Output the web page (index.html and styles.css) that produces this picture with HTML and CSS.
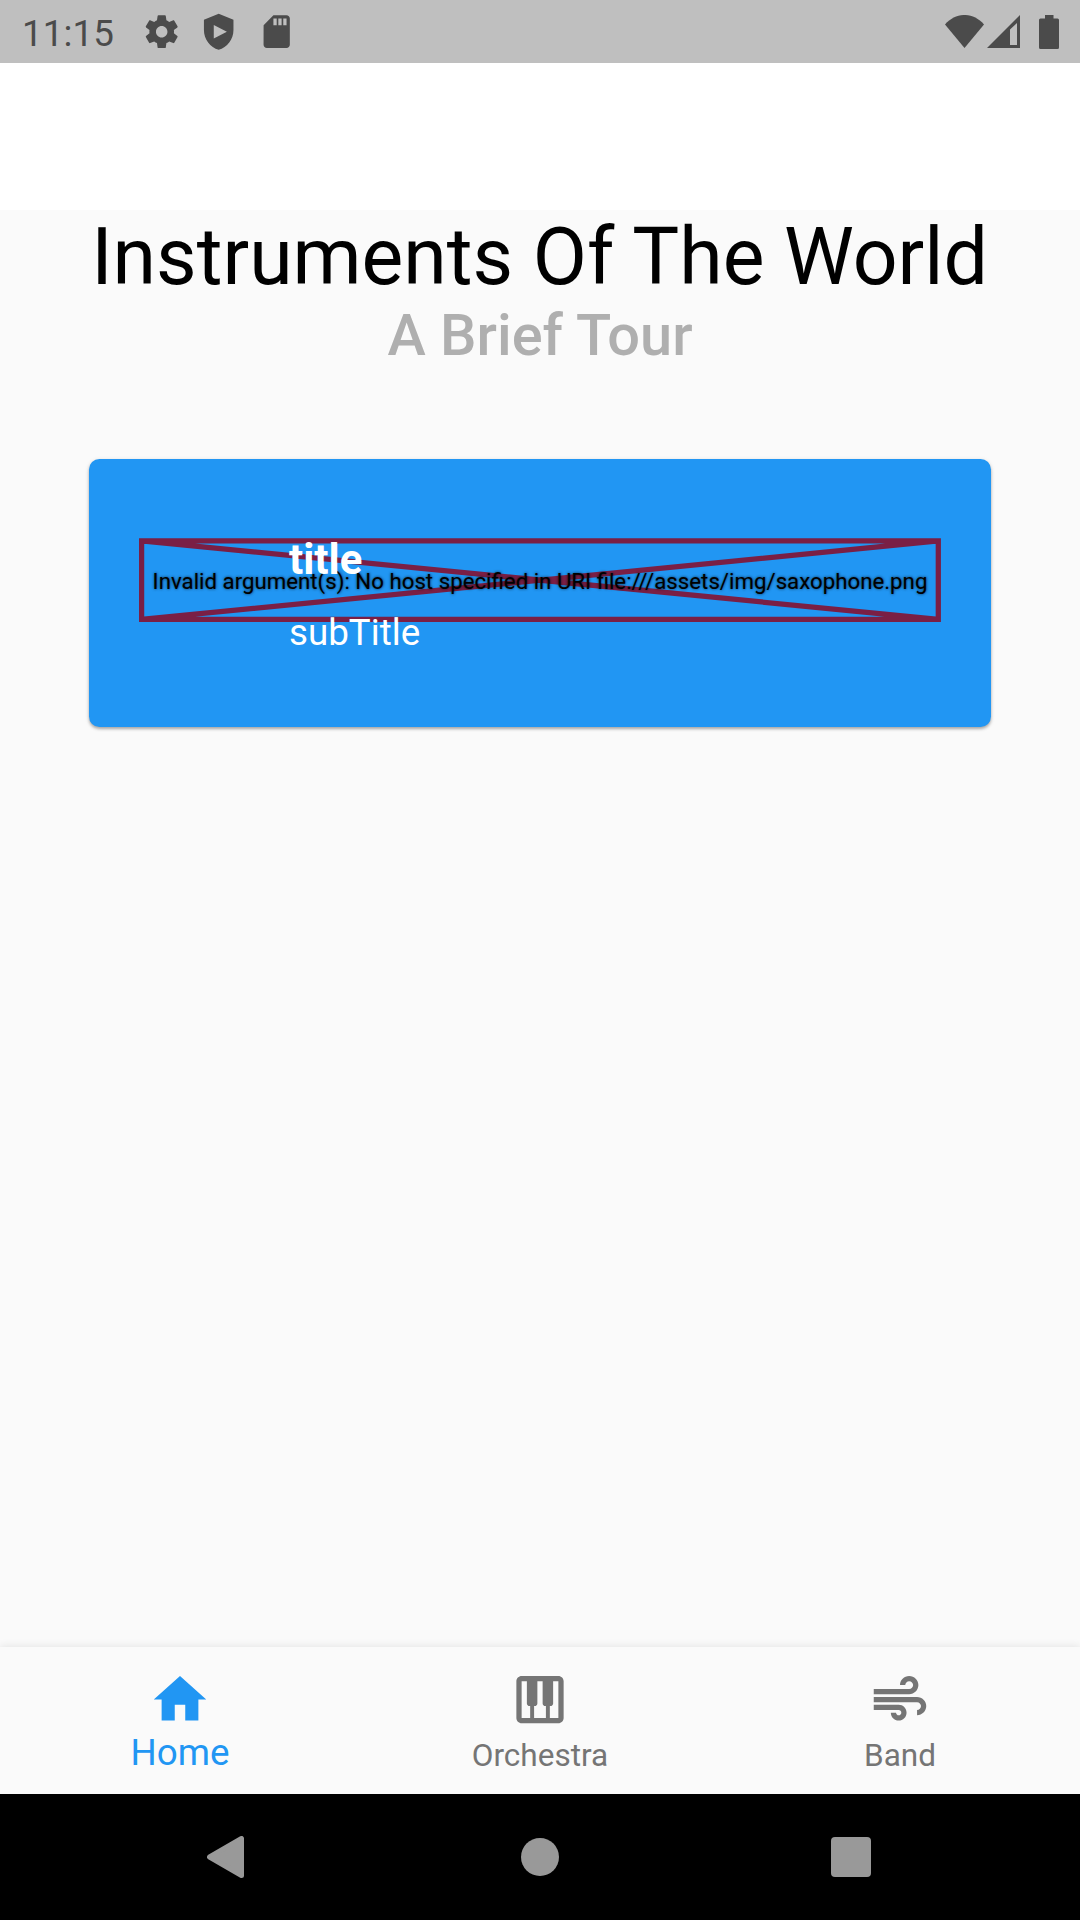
FILE: index.html
```html
<!DOCTYPE html>
<html lang="en">
<head>
<meta charset="utf-8">
<title>Instruments Of The World</title>
<link rel="stylesheet" href="styles.css">
</head>
<body>
<div class="screen">
  <header class="status">
    <span class="time">11:15</span>
    <div class="notices">
      <svg viewBox="0 0 24 24"><path d="M19.430 12.980c.04-.32.07-.64.07-.98s-.03-.66-.07-.98l2.110-1.650c.19-.15.24-.42.12-.64l-2-3.460c-.12-.22-.39-.3-.61-.22l-2.490 1c-.52-.4-1.080-.73-1.690-.98l-.38-2.650C14.460 2.180 14.250 2 14 2h-4c-.25 0-.46.18-.49.42l-.38 2.650c-.61.25-1.170.59-1.690.98l-2.490-1c-.23-.09-.49 0-.61.22l-2 3.460c-.13.22-.07.49.12.64l2.110 1.650c-.04.32-.07.65-.07.98s.03.66.07.98l-2.110 1.650c-.19.15-.24.42-.12.64l2 3.460c.12.22.39.3.61.22l2.490-1c.52.4 1.080.73 1.690.98l.38 2.650c.03.24.24.42.49.42h4c.25 0 .46-.18.49-.42l.38-2.650c.61-.25 1.170-.59 1.690-.98l2.490 1c.23.09.49 0 .61-.22l2-3.460c.12-.22.07-.49-.12-.64l-2.110-1.650zM12 15.500c-1.930 0-3.500-1.570-3.500-3.500s1.570-3.500 3.500-3.500 3.500 1.570 3.500 3.500-1.570 3.500-3.500 3.500z"/></svg>
      <svg viewBox="0 0 24 24"><path fill-rule="evenodd" d="M12 1 3 4.700V11c0 5.550 3.840 10.740 9 12 5.160-1.260 9-6.450 9-12V4.700zM9 7.900 17 12 9 16.200z"/></svg>
      <svg viewBox="0 0 24 24"><path d="M18 2h-8L4.020 8 4 20c0 1.100.9 2 2 2h12c1.100 0 2-.9 2-2V4c0-1.100-.9-2-2-2zm-6 6h-2V4h2v4zm3 0h-2V4h2v4zm3 0h-2V4h2v4z"/></svg>
    </div>
    <div class="signals">
      <svg class="wifi" viewBox="0 0 39 33"><path d="M0 9.500C11-3.200 28-3.200 39 9.500L19.500 33z"/></svg>
      <svg class="cell" viewBox="0 0 33 33"><path fill-rule="evenodd" d="M33 0V33H0zM30 8 23 14.500V30H30z"/></svg>
      <svg class="battery" viewBox="0 0 20 34"><path d="M6 0h8.500v3.500H18.500a1.500 1.500 0 0 1 1.500 1.500V32.500a1.500 1.500 0 0 1-1.500 1.500H1.500A1.500 1.500 0 0 1 0 32.500V5a1.500 1.500 0 0 1 1.500-1.500H6z"/></svg>
    </div>
  </header>
  <div class="appbar"></div>
  <main class="content">
    <h1 class="heading">Instruments Of The World</h1>
    <p class="tagline">A Brief Tour</p>
    <section class="card">
      <div class="broken">
        <svg class="cross" viewBox="0 0 802 84"><path d="M2.600 2.900H799.300V81.400H2.600zL799.300 81.400M799.300 2.900 2.600 81.400"/></svg>
        <span class="error">Invalid argument(s): No host specified in URI file:///assets/img/saxophone.png</span>
      </div>
      <div class="caption">
        <strong class="title">title</strong>
        <span class="subtitle">subTitle</span>
      </div>
    </section>
  </main>
  <nav class="tabs">
    <a class="tab active"><svg viewBox="0 0 24 24"><path d="M10 20v-6h4v6h5v-8h3L12 3 2 12h3v8z"/></svg><span>Home</span></a>
    <a class="tab"><svg viewBox="0 0 24 24"><path d="M19 3H5c-1.100 0-2 .9-2 2v14c0 1.100.9 2 2 2h14c1.100 0 2-.9 2-2V5c0-1.100-.9-2-2-2zm-5 11.500h.25V19h-4.500v-4.500H10c.55 0 1-.45 1-1V5h2v8.500c0 .55.45 1 1 1zM5 5h2v8.500c0 .55.45 1 1 1h.25V19H5V5zm14 14h-3.250v-4.500H16c.55 0 1-.45 1-1V5h2v14z"/></svg><span>Orchestra</span></a>
    <a class="tab"><svg viewBox="0 0 24 24"><path d="M14.500 17c0 1.650-1.350 3-3 3s-3-1.350-3-3h2c0 .55.45 1 1 1s1-.45 1-1-.45-1-1-1H2v-2h9.500c1.650 0 3 1.350 3 3zM19 6.500C19 4.570 17.430 3 15.500 3S12 4.570 12 6.500h2c0-.83.67-1.500 1.500-1.500s1.500.67 1.500 1.500S16.330 8 15.500 8H2v2h13.500c1.930 0 3.500-1.570 3.500-3.500zm-.5 4.500H2v2h16.500c.83 0 1.500.67 1.500 1.500s-.67 1.500-1.500 1.500v2c1.930 0 3.500-1.570 3.500-3.500S20.430 11 18.500 11z"/></svg><span>Band</span></a>
  </nav>
  <footer class="system">
    <svg class="back" viewBox="0 0 37 42"><path d="M2.500 21 34.500 2.500V39.500z"/></svg>
    <span class="home"></span>
    <span class="recent"></span>
  </footer>
</div>
</body>
</html>
```
FILE: styles.css
```css
* { box-sizing: border-box; margin: 0; padding: 0; }
body {
  width: 1080px;
  height: 1920px;
  overflow: hidden;
  font-family: Roboto, "Liberation Sans", sans-serif;
  background: #fafafa;
}
svg { display: block; }
.screen { display: flex; flex-direction: column; height: 1920px; }
.status {
  display: flex;
  align-items: center;
  height: 63px;
  padding: 0 21px 0 22px;
  background: #bfbfbf;
  color: #4b4b4b;
  fill: #4b4b4b;
}
.time { width: 119.500px; font-size: 36.75px; line-height: 43px; padding-top: 4px; letter-spacing: 0.1px; }
.notices { display: flex; gap: 18.6px; }
.notices svg { width: 39.4px; height: 39.4px; }
.signals { display: flex; margin-left: auto; align-items: center; }
.wifi { width: 39px; height: 33px; margin-right: 3px; }
.cell { width: 33px; height: 33px; margin-right: 19px; }
.battery { width: 20px; height: 34px; }
.appbar { height: 147px; background: #fff; }
.content {
  flex: 1;
  display: flex;
  flex-direction: column;
  align-items: center;
}
.heading { padding: 1px 1px 0 0; font-size: 78.75px; line-height: 92px; font-weight: 400; color: #000; white-space: nowrap; }
.tagline { font-size: 57.75px; line-height: 64px; font-weight: 500; color: #afafaf; }
.card {
  display: grid;
  width: 902px;
  height: 268px;
  margin-top: 92px;
  border-radius: 10.5px;
  background: #2196f3;
  box-shadow: 0 2px 3px rgba(0, 0, 0, 0.28), 0 1px 5px rgba(0, 0, 0, 0.1);
}
.broken, .caption { grid-area: 1 / 1; }
.broken {
  display: grid;
  place-items: center;
  width: 802px;
  height: 84px;
  margin: 79px 0 0 50px;
}
.cross { grid-area: 1 / 1; width: 802px; height: 84px; fill: none; stroke: #7a1f45; stroke-width: 5.25; }
.error {
  grid-area: 1 / 1;
  padding-top: 1px;
  font-size: 22.25px;
  line-height: 26px;
  font-weight: 400;
  color: #000;
  text-shadow: 0 0 3px rgba(0, 0, 0, 0.75);
  white-space: nowrap;
}
.caption {
  display: flex;
  flex-direction: column;
  gap: 27px;
  padding: 76px 0 0 200px;
  color: #fff;
  z-index: 1;
}
.title { font-size: 42px; line-height: 49px; font-weight: 700; }
.subtitle { font-size: 36.75px; line-height: 43px; }
.tabs {
  display: flex;
  height: 147px;
  background: #fafafa;
  box-shadow: 0 -1px 8px rgba(0, 0, 0, 0.09);
}
.tab {
  flex: 1;
  display: flex;
  flex-direction: column;
  align-items: center;
  padding-top: 21px;
  color: #757575;
  fill: #757575;
  font-size: 31.5px;
  line-height: 37px;
}
.tab svg { width: 64px; height: 63px; }
.tab span { margin-top: 6px; }
.active { color: #2196f3; fill: #2196f3; font-size: 36.75px; line-height: 43px; }
.active span { margin-top: 0; }
.system {
  display: flex;
  align-items: center;
  height: 126px;
  padding-left: 207px;
  background: #000;
}
.back { width: 37px; height: 42px; fill: #999; stroke: #999; stroke-width: 5; stroke-linejoin: round; }
.home { width: 38px; height: 38px; margin-left: 277px; border-radius: 50%; background: #999; }
.recent { width: 40px; height: 40px; margin-left: 272px; border-radius: 4px; background: #999; }
```
